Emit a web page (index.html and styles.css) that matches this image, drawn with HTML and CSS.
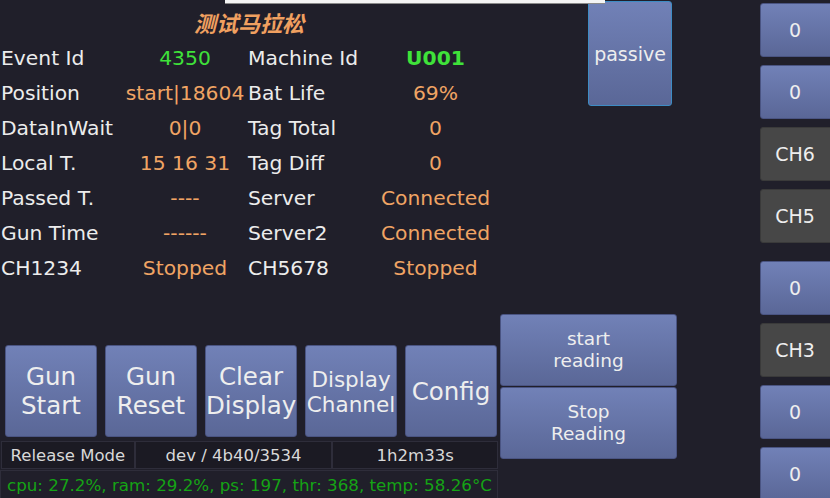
FILE: index.html
```html
<!DOCTYPE html>
<html lang="zh">
<head>
    <meta charset="UTF-8">
    <meta name="viewport" content="width=device-width, initial-scale=1.0">
    <title>测试马拉松</title>
    <link rel="stylesheet" href="styles.css">
</head>
<body>
    <div class="topstrip"></div>
    <div class="screen">
        <div class="left">
            <div class="title">测试马拉松</div>
            <div class="info">
                <div class="lbl">Event Id</div><div class="val green">4350</div>
                <div class="lbl">Machine Id</div><div class="val green bold">U001</div>

                <div class="lbl">Position</div><div class="val">start|18604</div>
                <div class="lbl">Bat Life</div><div class="val">69%</div>

                <div class="lbl">DataInWait</div><div class="val">0|0</div>
                <div class="lbl">Tag Total</div><div class="val">0</div>

                <div class="lbl">Local T.</div><div class="val">15 16 31</div>
                <div class="lbl">Tag Diff</div><div class="val">0</div>

                <div class="lbl">Passed T.</div><div class="val">----</div>
                <div class="lbl">Server</div><div class="val">Connected</div>

                <div class="lbl">Gun Time</div><div class="val">------</div>
                <div class="lbl">Server2</div><div class="val">Connected</div>

                <div class="lbl">CH1234</div><div class="val">Stopped</div>
                <div class="lbl">CH5678</div><div class="val">Stopped</div>
            </div>

            <div class="actions">
                <button class="btn big">Gun<br>Start</button>
                <button class="btn big">Gun<br>Reset</button>
                <button class="btn big">Clear<br>Display</button>
                <button class="btn mid">Display<br>Channel</button>
                <button class="btn big">Config</button>
            </div>

            <div class="status">
                <div class="cell c1">Release Mode</div>
                <div class="cell c2">dev / 4b40/3534</div>
                <div class="cell c3">1h2m33s</div>
            </div>
            <div class="sysline">cpu: 27.2%, ram: 29.2%, ps: 197, thr: 368, temp: 58.26°C</div>
        </div>

        <div class="middle">
            <button class="btn passive">passive</button>
            <div class="reading">
                <button class="btn read">start<br>reading</button>
                <button class="btn read">Stop<br>Reading</button>
            </div>
        </div>

        <div class="right">
            <button class="btn ch">0</button>
            <button class="btn ch">0</button>
            <button class="btn ch off">CH6</button>
            <button class="btn ch off">CH5</button>
            <button class="btn ch sep">0</button>
            <button class="btn ch off">CH3</button>
            <button class="btn ch">0</button>
            <button class="btn ch">0</button>
        </div>
    </div>
</body>
</html>
```

FILE: styles.css
```css
body {
    margin: 0;
    padding: 0;
    width: 830px;
    height: 498px;
    overflow: hidden;
    background-color: #201f2a;
    font-family: "DejaVu Sans", "Noto Sans CJK SC", sans-serif;
    color: #e6e6e6;
    position: relative;
}
.topstrip {
    position: absolute;
    left: 225px;
    top: 0;
    width: 380px;
    height: 3px;
    background-color: #f4f4f4;
    border-bottom: 1px solid #8a8a8a;
    z-index: 2;
}
.screen {
    display: flex;
    height: 498px;
}
.left {
    width: 498px;
    flex-shrink: 0;
    display: flex;
    flex-direction: column;
}
.title {
    height: 41px;
    line-height: 44px;
    text-align: center;
    font-family: "Noto Sans CJK SC", sans-serif;
    font-size: 22px;
    font-weight: bold;
    font-style: italic;
    color: #f0a060;
}
.info {
    display: grid;
    grid-template-columns: 125px 118px 134px 115px;
    padding-left: 1px;
    font-size: 20.3px;
    line-height: 35px;
}
.info .lbl:nth-child(4n+3) {
    padding-left: 4px;
}
.lbl {
    color: #ececec;
    white-space: nowrap;
}
.val {
    color: #f0a464;
    white-space: nowrap;
    overflow: hidden;
    display: flex;
    justify-content: center;
}
.green {
    color: #3fe23a;
}
.bold {
    font-weight: bold;
}
.btn {
    font-family: "DejaVu Sans", sans-serif;
    color: #eeeeee;
    background: linear-gradient(#7181b7, #5a6797);
    border: 1px solid #4a5482;
    border-radius: 3px;
    padding: 0;
    margin: 0;
    overflow: visible;
    flex-shrink: 0;
}
.actions {
    display: flex;
    gap: 8px;
    padding-left: 5px;
    margin-top: 59px;
}
.actions .btn {
    width: 92px;
    height: 92px;
    white-space: nowrap;
}
.big {
    font-size: 24.5px;
    line-height: 29px;
}
.mid {
    font-size: 21.5px;
    line-height: 25px;
    padding-top: 2px;
}
.status {
    display: flex;
    margin-top: 4px;
    height: 28px;
    font-size: 16.5px;
    color: #d8d8d8;
}
.cell {
    background-color: #1b1a23;
    border: 1px solid #2e2d3a;
    display: flex;
    align-items: center;
    justify-content: center;
}
.c1 {
    width: 132px;
    margin-left: 1px;
}
.c2 {
    width: 196px;
}
.c3 {
    width: 164px;
}
.sysline {
    height: 27px;
    margin-top: 1px;
    border: 1px solid #2e2d3a;
    border-bottom: none;
    padding-left: 6px;
    font-size: 16.7px;
    line-height: 28px;
    color: #15a315;
    white-space: nowrap;
}
.middle {
    width: 262px;
    flex-shrink: 0;
    display: flex;
    flex-direction: column;
    padding-left: 2px;
    box-sizing: border-box;
}
.passive {
    width: 84px;
    height: 105px;
    margin-left: 88px;
    margin-top: 1px;
    border-color: #3d8cc4;
    font-size: 19px;
}
.reading {
    margin-top: 208px;
    display: flex;
    flex-direction: column;
    gap: 1px;
}
.read {
    width: 177px;
    height: 72px;
    font-size: 18.5px;
    line-height: 22px;
}
.right {
    width: 70px;
    flex-shrink: 0;
    display: flex;
    flex-direction: column;
    gap: 8px;
    padding-top: 3px;
}
.ch {
    width: 74px;
    height: 54px;
    font-size: 19px;
    padding-right: 4px;
}
.off {
    background: #474747;
    border-color: #3a3a3a;
}
.sep {
    margin-top: 10px;
}
```
